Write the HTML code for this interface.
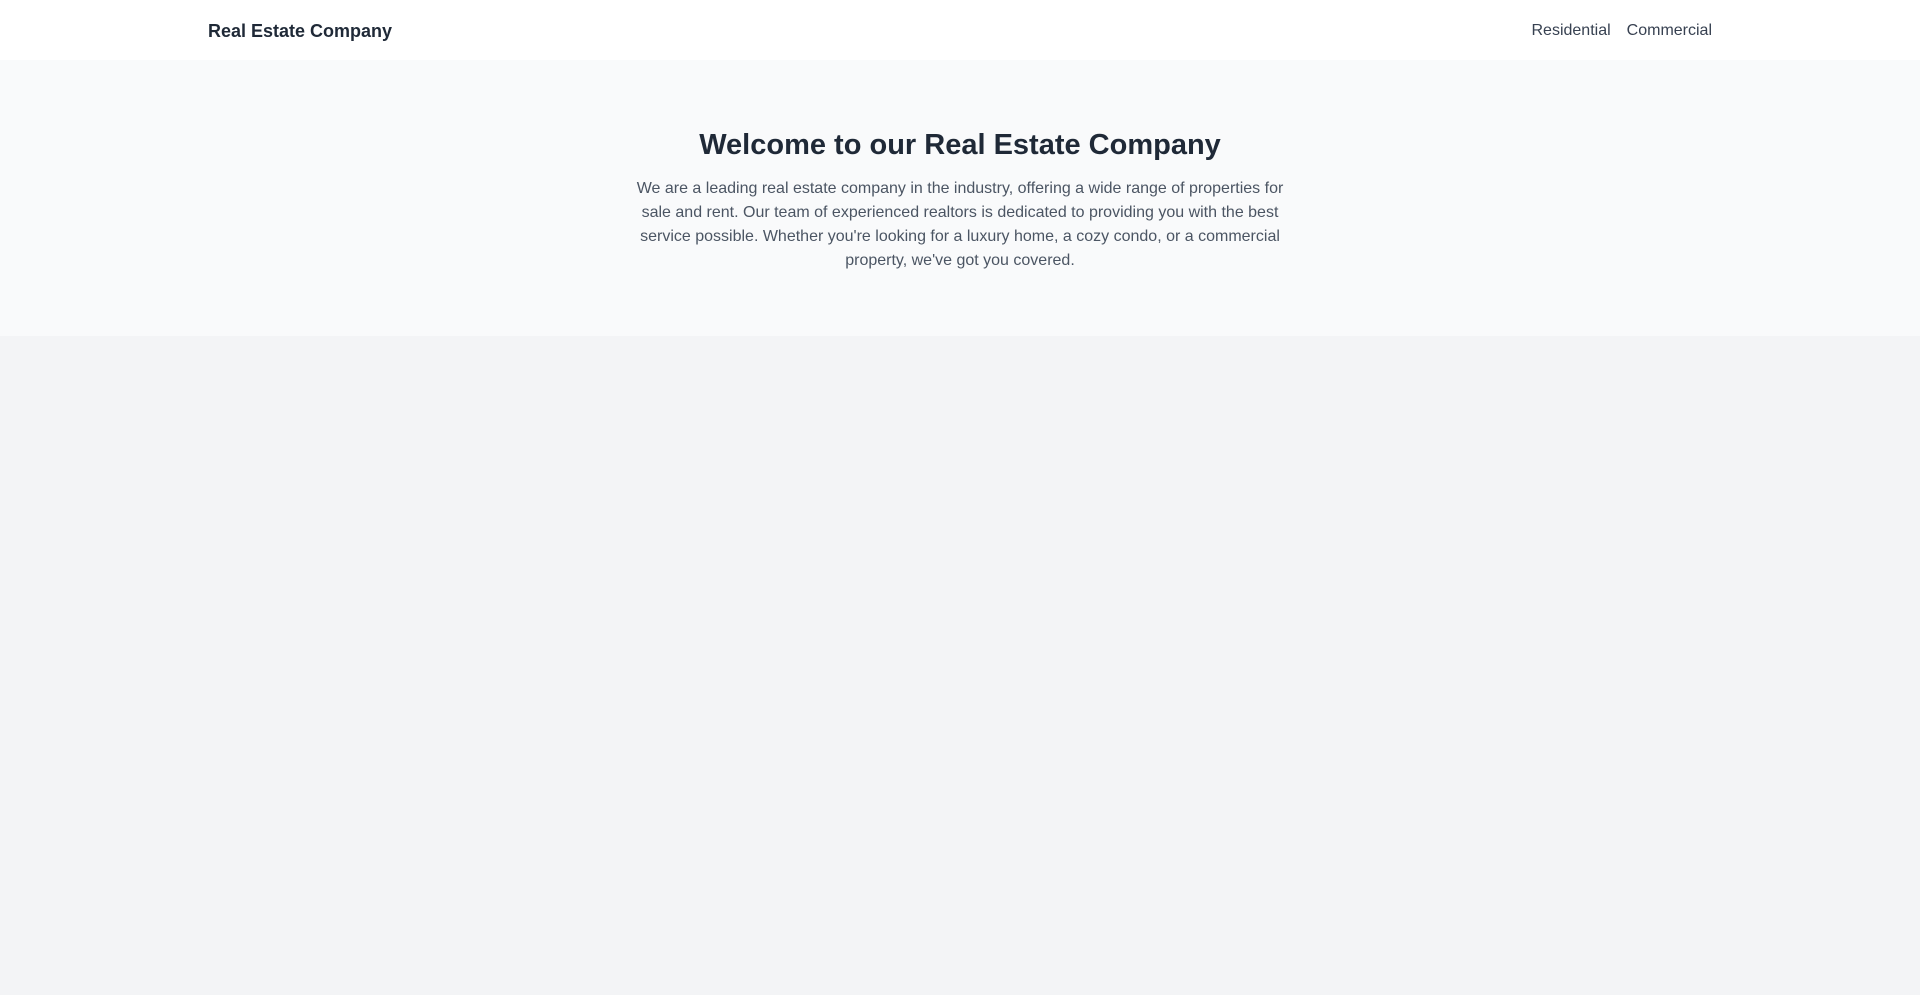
<!DOCTYPE html>
<html><head><meta charset="utf-8"><style>
*{margin:0;padding:0;box-sizing:border-box}
body{width:1920px;height:995px;background:#f3f4f6;font-family:"Liberation Sans",Arial,sans-serif;overflow:hidden}
nav{background:#fff;height:60px}
.c{width:1536px;margin:0 auto;padding:2px 16px 0;height:60px;display:flex;align-items:center;justify-content:space-between}
.logo{font-weight:bold;font-size:18px;color:#1f2937}
.links a{color:#374151;font-size:16px;text-decoration:none;margin-left:16px}
.hero{background:#f9fafb;height:276px;padding-top:67px;text-align:center}
h1{font-size:29px;line-height:36px;color:#1f2937;font-weight:bold;margin-bottom:14px}
p{width:672px;margin:0 auto;font-size:16px;line-height:24px;color:#4b5563}
</style></head><body>
<nav><div class="c"><div class="logo">Real Estate Company</div><div class="links"><a>Residential</a><a>Commercial</a></div></div></nav>
<div class="hero"><h1>Welcome to our Real Estate Company</h1>
<p>We are a leading real estate company in the industry, offering a wide range of properties for sale and rent. Our team of experienced realtors is dedicated to providing you with the best service possible. Whether you're looking for a luxury home, a cozy condo, or a commercial property, we've got you covered.</p></div>
</body></html>
